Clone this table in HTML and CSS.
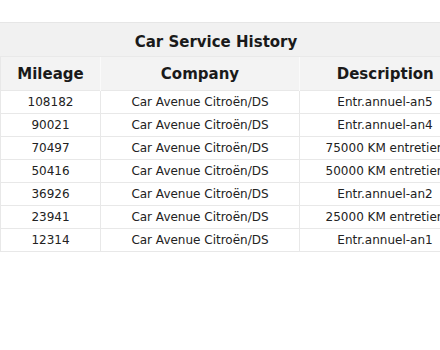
FILE: index.html
```html
<!DOCTYPE html>
<html>
<head>
<meta charset="utf-8">
<link rel="stylesheet" href="styles.css">
</head>
<body>
<div class="wrap">
  <div class="title">Car Service History</div>
  <table class="history">
    <colgroup>
      <col class="c-mileage">
      <col class="c-company">
      <col class="c-desc">
    </colgroup>
    <thead>
      <tr><th>Mileage</th><th>Company</th><th>Description</th></tr>
    </thead>
    <tbody>
      <tr><td>108182</td><td>Car Avenue Citroën/DS</td><td>Entr.annuel-an5</td></tr>
      <tr><td>90021</td><td>Car Avenue Citroën/DS</td><td>Entr.annuel-an4</td></tr>
      <tr><td>70497</td><td>Car Avenue Citroën/DS</td><td>75000 KM entretien</td></tr>
      <tr><td>50416</td><td>Car Avenue Citroën/DS</td><td>50000 KM entretien</td></tr>
      <tr><td>36926</td><td>Car Avenue Citroën/DS</td><td>Entr.annuel-an2</td></tr>
      <tr><td>23941</td><td>Car Avenue Citroën/DS</td><td>25000 KM entretien</td></tr>
      <tr><td>12314</td><td>Car Avenue Citroën/DS</td><td>Entr.annuel-an1</td></tr>
    </tbody>
  </table>
</div>
</body>
</html>
```
FILE: styles.css
```css
html, body {
  margin: 0;
  padding: 0;
  background: #ffffff;
  overflow: hidden;
}
body {
  font-family: "DejaVu Sans", sans-serif;
  color: #222222;
}
.wrap {
  width: 440px;
  padding-top: 22px;
  overflow: hidden;
}
.title {
  width: 432px;
  padding-right: 8px;
  padding-top: 5px;
  height: 28px;
  line-height: 28px;
  text-align: center;
  font-size: 15px;
  font-weight: bold;
  background: #f1f1f1;
  border-top: 1px solid #e6e6e6;
  color: #1a1a1a;
}
.history {
  border-collapse: collapse;
  table-layout: fixed;
  width: 470px;
}
.c-mileage { width: 100px; }
.c-company { width: 199px; }
.c-desc { width: 171px; }
.history th {
  height: 33px;
  padding: 0;
  font-size: 15px;
  font-weight: bold;
  background: #f3f3f3;
  border-left: 1px solid #fafafa;
  border-top: 1px solid #e9e9e9;
  color: #1a1a1a;
  text-align: center;
}
.history td {
  height: 22px;
  padding: 0;
  font-size: 12px;
  text-align: center;
  white-space: nowrap;
  border: 1px solid #e8e8e8;
  color: #222222;
}
.history th:first-child, .history td:first-child {
  border-left: 1px solid #e8e8e8;
}
```
